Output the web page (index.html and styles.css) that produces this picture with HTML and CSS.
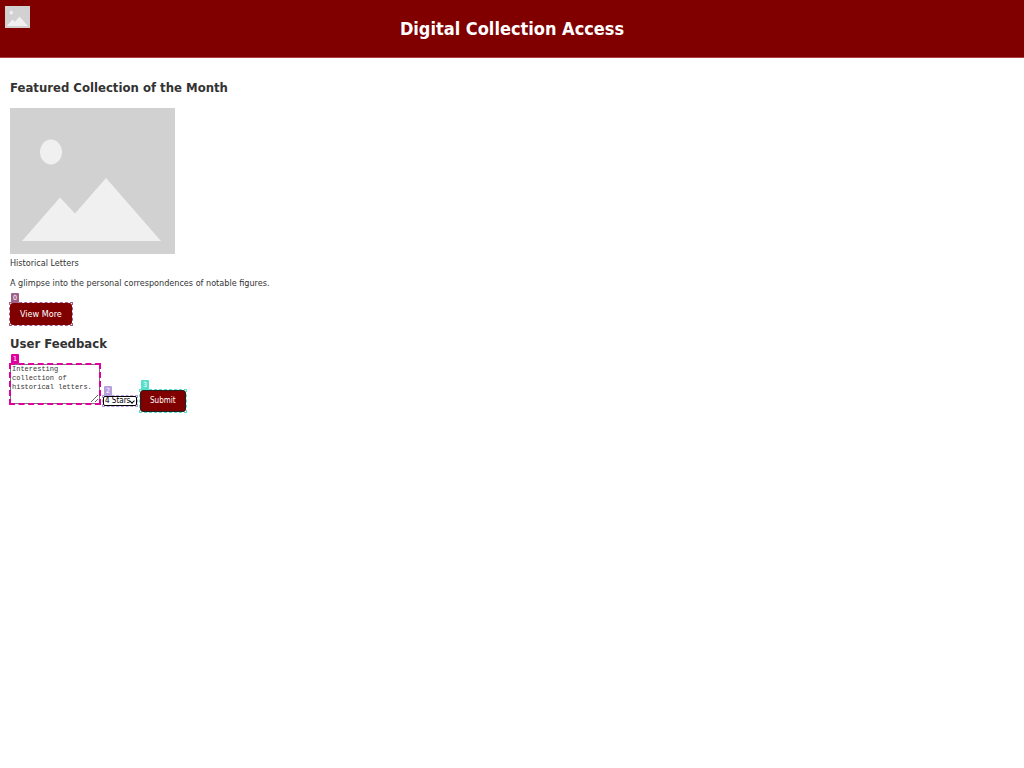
FILE: index.html
```html
<!DOCTYPE html>
<html lang="en">
<head>
<meta charset="utf-8">
<title>Digital Collection Access</title>
<link rel="stylesheet" href="styles.css">
</head>
<body>
<header class="header">
  <svg class="logo" viewBox="0 0 165 146" preserveAspectRatio="none" role="img" aria-label="Logo">
    <rect width="165" height="146" fill="#d1d1d1"/>
    <ellipse cx="41" cy="44" rx="11" ry="12.5" fill="#f0f0f0"/>
    <path d="M12 133 50 89.500 65 105.500 96 70 151 133Z" fill="#f0f0f0"/>
  </svg>
  <h1 class="title">Digital Collection Access</h1>
</header>
<main class="main">
  <section class="featured">
    <h2 class="heading">Featured Collection of the Month</h2>
    <figure class="figure">
      <svg class="picture" viewBox="0 0 165 146" role="img" aria-label="Historical Letters">
        <rect width="165" height="146" fill="#d1d1d1"/>
        <ellipse cx="41" cy="44" rx="11" ry="12.5" fill="#f0f0f0"/>
        <path d="M12 133 50 89.500 65 105.500 96 70 151 133Z" fill="#f0f0f0"/>
      </svg>
      <figcaption class="caption">Historical Letters</figcaption>
    </figure>
    <p class="text">A glimpse into the personal correspondences of notable figures.</p>
    <div class="mark mark-plum"><span class="tag">0</span><button class="button button-large" type="button">View More</button></div>
  </section>
  <section class="feedback">
    <h2 class="heading">User Feedback</h2>
    <form class="form">
      <div class="mark mark-pink"><span class="tag">1</span><textarea class="comment" aria-label="Comment">Interesting collection of historical letters.</textarea></div>
      <div class="mark mark-lilac"><span class="tag">2</span><select class="rating" aria-label="Rating"><option>5 Stars</option><option selected>4 Stars</option><option>3 Stars</option><option>2 Stars</option><option>1 Star</option></select></div>
      <div class="mark mark-teal"><span class="tag">3</span><button class="button button-submit" type="button">Submit</button></div>
    </form>
  </section>
</main>
</body>
</html>
```
FILE: styles.css
```css
* { box-sizing: border-box; }
body {
  margin: 0;
  background: #fff;
  color: #333;
  font: 9px/12px "DejaVu Sans Condensed", "DejaVu Sans", sans-serif;
}
.header {
  position: relative;
  padding: 19px 10px 18px;
  background: #800000;
  border-bottom: 1px solid #a84040;
  color: #fff;
  text-align: center;
}
.logo {
  position: absolute;
  top: 6px;
  left: 5px;
  width: 25px;
  height: 22px;
}
.title { margin: 0; font-size: 18px; line-height: 20px; }
.main { padding: 20px 10px; }
.heading { margin: 0; font-size: 13px; line-height: 20px; }
.figure { margin: 10px 0 0; }
.picture { display: block; width: 165px; height: 146px; }
.caption { margin-top: 3px; }
.text { margin: 8px 0 14px; }
.mark { position: relative; width: max-content; }
.mark::after {
  content: "";
  position: absolute;
  inset: -1px;
  border: 1px dashed var(--mark);
  pointer-events: none;
}
.mark-plum { --mark: #9e5f88; }
.mark-pink { --mark: #e0009d; margin-bottom: 8px; }
.mark-lilac { --mark: #b79fe0; margin-bottom: 6px; }
.mark-teal { --mark: #57dfcb; }
.mark-pink::after { border-width: 2px; }
.tag {
  position: absolute;
  bottom: 100%;
  left: 1px;
  width: 8px;
  height: 10px;
  border-radius: 1px;
  background: var(--mark);
  color: #fff;
  font-size: 7px;
  line-height: 10px;
  text-align: center;
}
.button {
  display: block;
  height: 22px;
  padding: 0 10px;
  background: #800000;
  border: 0;
  border-radius: 3px;
  color: #fff;
  font: 8px/12px "DejaVu Sans Condensed", "DejaVu Sans", sans-serif;
}
.button-large { font-size: 9px; }
.button-submit { padding: 0 9px; border: 1px solid #222; }
.feedback { margin-top: 9px; }
.form { display: flex; align-items: flex-end; gap: 3px; margin-top: 10px; }
.comment {
  display: block;
  width: 90px;
  height: 40px;
  padding: 0 1px;
  border: 1px solid #777;
  color: #333;
  font: 7px/9px "Liberation Mono", monospace;
}
.rating {
  display: block;
  appearance: none;
  width: 34px;
  height: 10px;
  padding: 0 0 0 1px;
  background: #fff;
  border: 1px solid #000;
  border-radius: 2px;
  color: #000;
  font: 8px/8px "DejaVu Sans Condensed", "DejaVu Sans", sans-serif;
}
.mark-lilac::before {
  content: "";
  position: absolute;
  top: 3px;
  right: 3px;
  width: 3px;
  height: 3px;
  border: solid #000;
  border-width: 0 1px 1px 0;
  transform: rotate(45deg);
  pointer-events: none;
  z-index: 1;
}
```
